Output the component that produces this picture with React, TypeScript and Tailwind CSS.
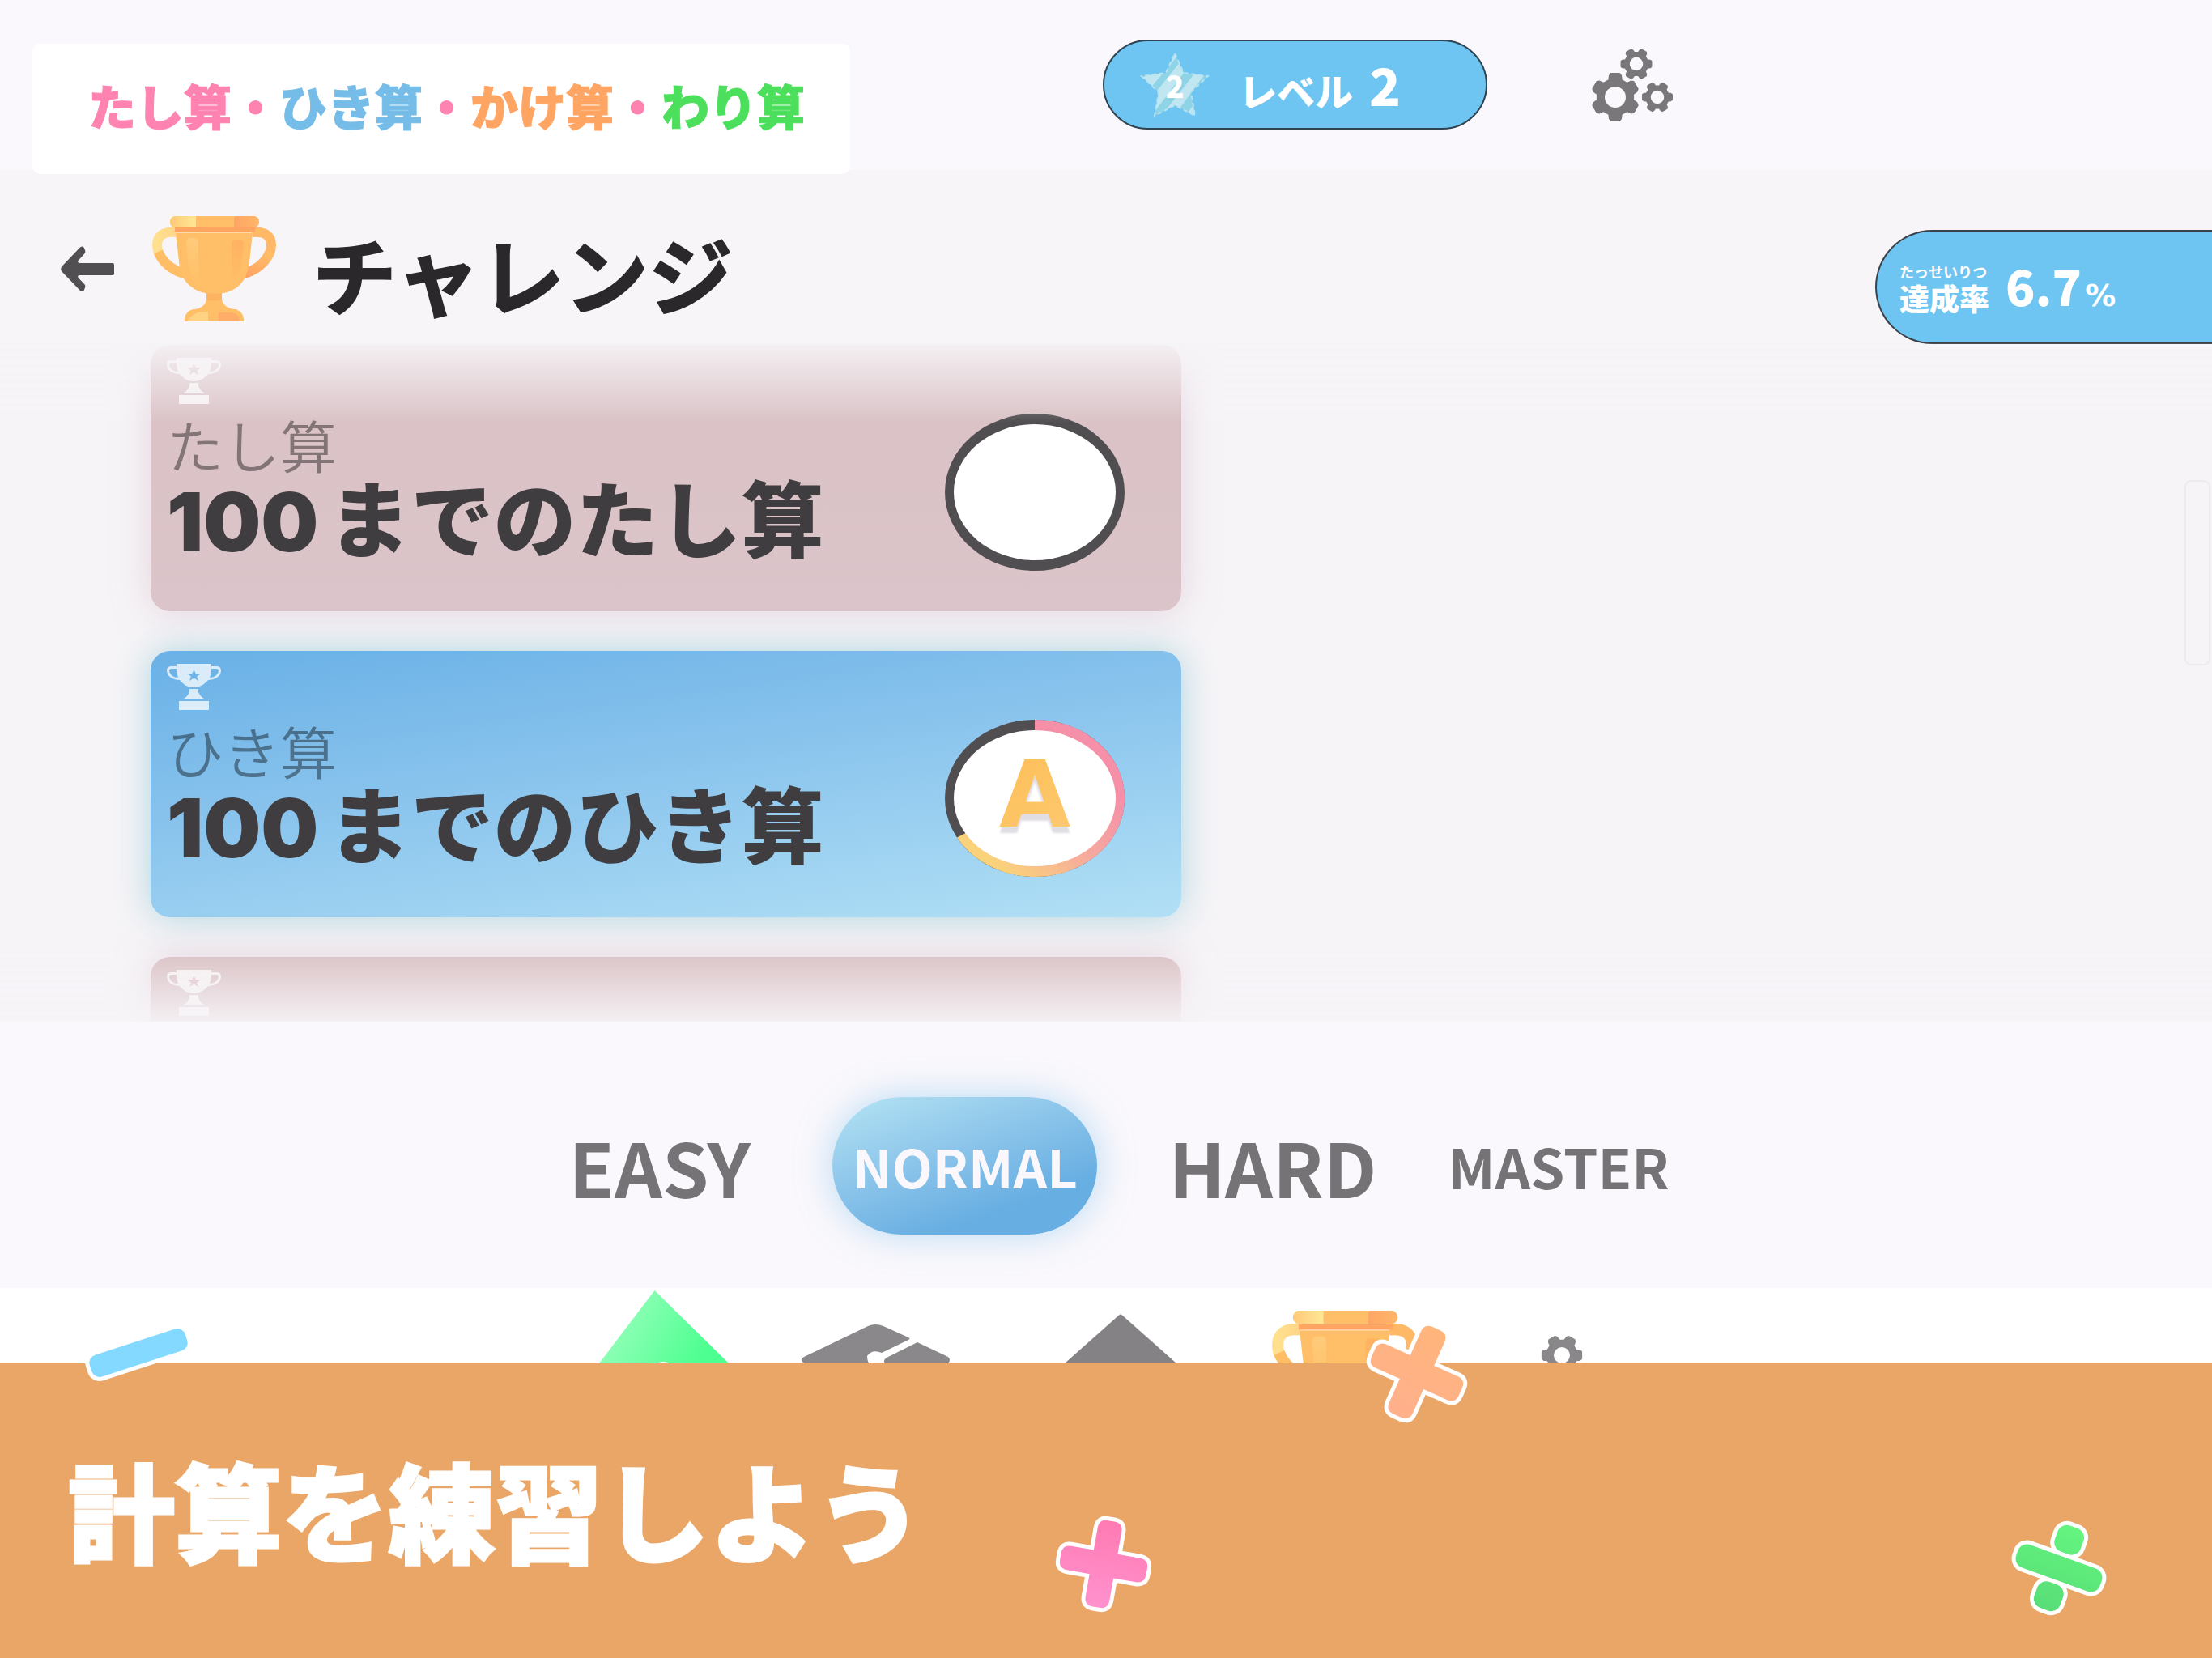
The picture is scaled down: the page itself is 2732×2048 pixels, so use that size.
import React, { useId } from "react";

const JP = "font-['Noto_Sans_CJK_JP','Noto_Sans',sans-serif]";

function gearPath(cx: number, cy: number, r: number, hole: number, start: number) {
  const body = r * 0.76;
  const pts: string[] = [];
  const at = (rad: number, deg: number) => {
    const a = (deg * Math.PI) / 180;
    return `${(cx + rad * Math.cos(a)).toFixed(2)} ${(cy + rad * Math.sin(a)).toFixed(2)}`;
  };
  for (let i = 0; i < 6; i++) {
    const a = start + i * 60;
    pts.push(at(body, a - 20), at(r * 0.93, a - 15), at(r, a - 10), at(r, a + 10), at(r * 0.93, a + 15), at(body, a + 20));
  }
  return (
    `M${pts.join("L")}Z` +
    `M${cx - hole} ${cy}a${hole} ${hole} 0 1 0 ${hole * 2} 0a${hole} ${hole} 0 1 0 ${-hole * 2} 0Z`
  );
}

function Gears() {
  return (
    <svg className="h-[104px] w-[104px]" viewBox="0 0 104 104" fill="#79777a" stroke="#79777a" strokeLinejoin="round" fillRule="evenodd">
      <path strokeWidth="2" d={gearPath(32, 68, 29.5, 14, 30)} />
      <path strokeWidth="1.5" d={gearPath(58, 27, 19, 9, 0)} />
      <path strokeWidth="1.5" d={gearPath(84, 68, 18.5, 9, 0)} />
    </svg>
  );
}

function Trophy({ className }: { className: string }) {
  const id = useId();
  return (
    <svg className={className} viewBox="0 0 153 130" fill="none">
      <defs>
        <linearGradient id={`${id}l`} x1="0" y1="0" x2="1" y2="0">
          <stop offset="0" stopColor="#ffc978" />
          <stop offset="1" stopColor="#ffe795" />
        </linearGradient>
        <linearGradient id={`${id}r`} x1="0" y1="0" x2="1" y2="0">
          <stop offset="0" stopColor="#ffa566" />
          <stop offset="1" stopColor="#ffb768" />
        </linearGradient>
        <linearGradient id={`${id}h`} x1="1" y1="0" x2="0" y2="0">
          <stop offset="0" stopColor="#ffd588" />
          <stop offset="1" stopColor="#ffe08e" />
        </linearGradient>
        <linearGradient id={`${id}g`} x1="1" y1="0" x2="0" y2="1">
          <stop offset="0" stopColor="#ffbf68" />
          <stop offset="1" stopColor="#ffa163" />
        </linearGradient>
        <linearGradient id={`${id}s`} x1="0" y1="0" x2="0" y2="1">
          <stop offset="0" stopColor="#ffcb7a" />
          <stop offset="1" stopColor="#ffbf68" />
        </linearGradient>
        <linearGradient id={`${id}t`} x1="0" y1="0" x2="0" y2="1">
          <stop offset="0" stopColor="#ffb262" />
          <stop offset="1" stopColor="#ffbf68" />
        </linearGradient>
      </defs>
      <path d="M30 20C13 18 6 25 6 36c0 4 1 8 3 12" stroke={`url(#${id}h)`} strokeWidth="12" />
      <path d="M7.500 44C13 58 25 67 42 72" stroke="#ffbd66" strokeWidth="12" />
      <path d="M123 20c17-2 24 5 24 16 0 4-1 8-3 12" stroke="#ffb866" strokeWidth="12" />
      <path d="M145.500 44C140 58 128 67 111 72" stroke={`url(#${id}g)`} strokeWidth="12" />
      <path d="M28 14h99v6H28z" fill="#ffa562" />
      <path d="M29 20.500h95l-4 36c-2 22-14 36-34 39v7c1 8 8 12 19 13v6H49v-6c11-1 17-5 18-13v-7C47 91 35 79 33 56z" fill="#ffbf68" />
      <path d="M67 95q9.500 1.500 19 0v8q-8 3-18 1z" fill="#fcb462" />
      <path d="M42 32q0-5 5-5h5q5 0 5 5v28c0 9 2 16 6 23-11-4-18-15-19-28z" fill={`url(#${id}s)`} />
      <path d="M98 34q0-5 5-5h5q5 0 5 5l-2 22c-1 12-7 22-14 27 2-6 1-14 1-23z" fill={`url(#${id}t)`} />
      <rect x="22" y="0" width="110" height="14" rx="7" fill="#ffbf68" />
      <path d="M29 0h25v14H29a7 7 0 0 1 0-14z" fill={`url(#${id}l)`} />
      <path d="M105 0h20a7 7 0 0 1 0 14h-24V4q0-4 4-4z" fill={`url(#${id}r)`} />
      <path d="M40 130v-3c1-8 6-12 14-12h45c8 0 13 4 14 12v3z" fill="#ffbf68" />
      <path d="M42 130q12-13 20-12h7v12z" fill="#ffd382" />
      <path d="M82 119h14q11 0 12 11H82z" fill="#ffad68" />
    </svg>
  );
}

function CupIcon() {
  return (
    <svg className="h-[57px] w-[67px]" viewBox="0 0 67 57" fill="#fff" fillOpacity="0.75">
      <path
        fillRule="evenodd"
        d="M12 0h43v3h6q6 0 6 5c0 8-8 12-16 12-4 5-10 9-18 9s-13-4-17-9C8 20 0 16 0 8q0-5 6-5h6zM12 6H6q-3 0-3 3c1 5 6 8 11 8q-2-5-2-11zm43 0q0 6-2 11c5 0 10-3 11-8q0-3-3-3zM33.500 7l-2.200 5H25l4.800 3.500L28 21l5.500-3.400L39 21l-1.800-5.500L42 12h-6.300z"
      />
      <path d="M28 31h11v4q2 5 7 8v1H21v-1q5-3 7-8z" />
      <path d="M15 46h37v11H15z" />
    </svg>
  );
}

function Ring({ progress }: { progress: boolean }) {
  const id = useId();
  return (
    <svg className="h-[194px] w-[222px]" viewBox="0 0 222 194">
      <defs>
        <linearGradient id={id} x1="0.9" y1="0.1" x2="0.2" y2="0.9">
          <stop offset="0.25" stopColor="#f590a8" />
          <stop offset="0.6" stopColor="#f6a89f" />
          <stop offset="1" stopColor="#fad27a" />
        </linearGradient>
      </defs>
      <ellipse cx="111" cy="97" rx="111" ry="97" fill="#504e50" />
      {progress && <path d="M111 0A111 97 0 1 1 15 145.500L111 97Z" fill={`url(#${id})`} />}
      <ellipse cx="111" cy="97" rx="100" ry="84" fill="#fff" />
    </svg>
  );
}

function Card({ kind, title, grade, tone }: { kind?: string; title?: string; grade?: string; tone: "pink" | "blue" }) {
  return (
    <button
      type="button"
      className={`flex min-h-[329px] w-[1273px] max-w-full shrink-0 items-start justify-between rounded-[24px] pt-[16px] pr-[70px] pb-[45px] pl-[20px] text-left ${
        tone === "pink"
          ? "bg-linear-to-b from-[#d9c1c4] to-[#dcc5ca] shadow-[0_0_44px_rgba(214,190,204,0.6)]"
          : "bg-[linear-gradient(172deg,#6cb2e7_4%,#8ac4ed_45%,#b0dff5_98%)] shadow-[0_0_44px_rgba(160,208,218,0.85)]"
      }`}
    >
      <span className="flex flex-col">
        <CupIcon />
        {kind && <span className="mt-[14px] text-[70px] leading-[72px] font-[350] text-black/40">{kind}</span>}
        {title && (
          <span className="flex items-baseline gap-[12px] text-[102px] leading-[104px] font-black text-[#403d40]">
            <span className="font-['Inter',sans-serif] text-[100px] font-black">100</span>
            <span>{title}</span>
          </span>
        )}
      </span>
      <span className="relative mt-[69px] block">
        <Ring progress={Boolean(grade)} />
        {grade && (
          <span className="absolute inset-0 flex items-center justify-center bg-linear-to-br from-[#fbb949] to-[#ffcf7c] bg-clip-text pb-[8px] font-['DejaVu_Sans',sans-serif] text-[114px] leading-[114px] font-bold text-transparent drop-shadow-[0_8px_1px_rgba(60,50,80,0.16)]">
            {grade}
          </span>
        )}
      </span>
    </button>
  );
}

function Sign({ className, from, to, angle, children }: { className: string; from: string; to: string; angle: number; children: React.ReactNode }) {
  const id = useId();
  return (
    <svg className={`absolute h-[160px] w-[160px] ${className}`} viewBox="-80 -80 160 160" aria-hidden="true">
      <defs>
        <linearGradient id={id} gradientUnits="userSpaceOnUse" x1="0" y1="-56" x2="0" y2="56">
          <stop offset="0" stopColor={from} />
          <stop offset="1" stopColor={to} />
        </linearGradient>
      </defs>
      <g transform={`rotate(${angle})`}>
        <g fill="#fff" stroke="#fff" strokeWidth="10">{children}</g>
        <g fill={`url(#${id})`}>{children}</g>
      </g>
    </svg>
  );
}

function LevelStar() {
  const star = "M43 2L54 26 84 30 63 50 68 79 43 66 18 79 23 50 2 30 32 26Z";
  return (
    <span className="relative block">
      <svg className="h-[82px] w-[86px]" viewBox="0 0 86 82">
        <clipPath id="star-clip">
          <path d={star} />
        </clipPath>
        <g clipPath="url(#star-clip)">
          <path d="M0 0h86v82H0z" fill="#8fd3e6" />
          <path d="M43-10h16L-10 72V48zM80-8L12 82h-18L66-8zM90 14L40 82H24L90-2zM90 46L66 82H54L90 34z" fill="#c0e7f1" />
        </g>
        <path d={star} fill="none" stroke="#b5e2f3" strokeWidth="2" strokeDasharray="5 4" />
      </svg>
      <span className="absolute inset-0 flex items-center justify-center text-[38px] leading-[38px] font-black text-white">2</span>
    </span>
  );
}

const levels = [
  { name: "EASY", size: "text-[92px]" },
  { name: "NORMAL", size: "text-[65px]" },
  { name: "HARD", size: "text-[92px]" },
  { name: "MASTER", size: "text-[68px]" },
];

export default function App() {
  return (
    <div className={`flex min-h-screen flex-col overflow-hidden bg-[#f7f5f8] ${JP}`}>
      <header className="grid h-[210px] grid-cols-2 bg-[#faf8fc]">
        <div className="pt-[54px] pl-[40px]">
          <div className="relative z-10 flex h-[161px] w-fit items-center rounded-[10px] bg-white pr-[56px] pb-[10px] pl-[69px] text-[59px] leading-[59px] font-black whitespace-nowrap text-[#ff83b0] [-webkit-text-stroke:1px]">
            <span>たし算</span>
            <span>・</span>
            <span className="text-[#75bde8]">ひき算</span>
            <span>・</span>
            <span className="text-[#ffa564]">かけ算</span>
            <span>・</span>
            <span className="text-[#4cdf5c]">わり算</span>
          </div>
        </div>
        <div className="flex items-start gap-[126px] pt-[49px]">
          <div className="-ml-1 flex h-[111px] w-[475px] items-center rounded-full border-2 border-[#2f4350] bg-[#6fc5f2] pl-[44px] font-black text-white">
            <LevelStar />
            <p className="ml-[36px] flex items-baseline gap-[20px] pt-[4px] leading-[66px]">
              <span className="text-[47px]">レベル</span>
              <span className="text-[64px]">2</span>
            </p>
          </div>
          <button type="button" aria-label="設定" className="mt-[3px] block">
            <Gears />
          </button>
        </div>
      </header>

      <div className="flex h-[214px] items-center pt-[30px] pl-[75px]">
        <button type="button" aria-label="もどる">
          <svg className="h-[56px] w-[66px]" viewBox="0 0 66 56" fill="#524f53">
            <path d="M1 25.500L24 1.500q2.500-2 4.500 0l1.500 3.500q1 2.500-.8 4.500L22 17.500q-2.500 3.500 2 3.500h40q2 0 2 2v11q0 2-2 2H24q-4.500 0-2 3.500l7.200 7.500q1.800 2 .8 4.500l-1.500 3.500q-2 2-4.500 0L1 31q-1.500-2.500 0-5.500z" />
          </svg>
        </button>
        <Trophy className="ml-[47px] h-[130px] w-[153px]" />
        <h1 className="ml-[45px] pt-[10px] text-[104px] leading-[104px] font-bold text-[#2b282b] [-webkit-text-stroke:2px]">チャレンジ</h1>
        <div className="mt-[44px] ml-auto flex h-[141px] w-[416px] items-center rounded-l-full border-2 border-r-0 border-[#3a4148] bg-[#6fc5f2] pl-[28px] text-white">
          <div className="font-black">
            <p className="text-[18px] leading-[28px] font-bold">たっせいりつ</p>
            <p className="text-[37px] leading-[38px]">達成率</p>
          </div>
          <p className="ml-[20px] flex items-baseline gap-[4px] pt-[8px] leading-[60px] font-black">
            <span className="text-[60px]">6.7</span>
            <span className="font-['DejaVu_Sans',sans-serif] text-[38px] font-bold">%</span>
          </p>
        </div>
      </div>

      <div className="relative">
        <main className="flex h-[838px] flex-col gap-[49px] overflow-hidden bg-[#f6f4f7] mask-[linear-gradient(to_bottom,rgba(0,0,0,0.08)_0px,black_98px,black_750px,rgba(0,0,0,0.1)_838px)] pt-[2px] pl-[186px]">
          <Card tone="pink" kind="たし算" title="までのたし算" />
          <Card tone="blue" kind="ひき算" title="までのひき算" grade="A" />
          <Card tone="pink" />
        </main>
        <div className="absolute top-[169px] right-[2px] h-[229px] w-[32px] rounded-[8px] border-2 border-[#eeebee]" />
      </div>

      <div className="flex h-[329px] items-center justify-center gap-[88px] bg-[#faf8fc] pt-[26px] pl-[32px] font-bold text-[#767377]">
        {levels.map((l) => (
          <button
            key={l.name}
            type="button"
            aria-pressed={l.name === "NORMAL"}
            className={`leading-[90px] ${l.size} ${
              l.name === "NORMAL"
                ? "h-[170px] w-[327px] rounded-full bg-[linear-gradient(160deg,#b0e0f2_5%,#8bc4ea_42%,#67aee2_75%)] text-[#faf8fc] shadow-[0_0_44px_rgba(120,190,240,0.5)]"
                : "min-w-[238px] text-left"
            }`}
          >
            {l.name}
          </button>
        ))}
      </div>

      <nav className="flex h-[93px] items-start justify-center overflow-hidden bg-white pr-[37px]">
        <button type="button" aria-label="ホーム" className="mt-[3px]">
          <svg className="h-[90px] w-[160px]" viewBox="0 0 160 90">
            <defs>
              <linearGradient id="home-fill" x1="0" y1="0.3" x2="1" y2="0.6">
                <stop offset="0.1" stopColor="#95ffba" />
                <stop offset="0.9" stopColor="#4dff90" />
              </linearGradient>
            </defs>
            <path d="M68.500 0L160 90H0z" fill="url(#home-fill)" />
            <ellipse cx="79" cy="92" rx="8" ry="4" fill="#fff" />
          </svg>
        </button>
        <button type="button" aria-label="学習" className="mt-[45px] ml-[90px]">
          <svg className="h-[48px] w-[183px]" viewBox="0 0 183 48" fill="#8a888b">
            <path d="M82 2q9-4 19 0l31 14q3 1.500 0 3L99 35q-12-5-18 4 0 5 2 9H3q-6-5 0-8z" />
            <path d="M143 22l38 18q4 4 0 8h-78q-3-4 2-7z" />
          </svg>
        </button>
        <button type="button" aria-label="問題" className="mt-[32px] ml-[142px]">
          <svg className="h-[61px] w-[138px]" viewBox="0 0 138 61" fill="#848285">
            <path d="M67 1.500q2-2 4 0L138 61H0z" />
          </svg>
        </button>
        <button type="button" aria-label="チャレンジ" className="mt-[28px] ml-[118px] shrink-0">
          <Trophy className="h-[153px] w-[180px]" />
        </button>
        <button type="button" aria-label="設定" className="mt-[57px] ml-[152px] shrink-0">
          <svg className="h-[52px] w-[52px]" viewBox="0 0 52 52" fill="#89878a" stroke="#89878a" strokeWidth="2" strokeLinejoin="round" fillRule="evenodd">
            <path d={gearPath(26, 26, 24.5, 11, 0)} />
          </svg>
        </button>
      </nav>

      <footer className="relative flex flex-1 items-center bg-[#e9a667] pt-[110px] pb-[116px] pl-[84px]">
        <h2 className="text-[132px] leading-[132px] font-black text-white [-webkit-text-stroke:3px_white] [stroke-linejoin:round]">計算を練習しよう</h2>
        <Sign className="top-[-93px] left-[91px]" from="#83d9ff" to="#83d9ff" angle={-18}>
          <rect x="-62" y="-14" width="124" height="28" rx="10" />
        </Sign>
        <Sign className="top-[-69px] left-[1670px]" from="#ffb57c" to="#ffb08c" angle={24}>
          <path d="M-16-48q0-11 11-11H5q11 0 11 11v32h32q11 0 11 11V5q0 11-11 11H16v32q0 11-11 11H-5q-11 0-11-11V16h-32q-11 0-11-11V-5q0-11 11-11h32z" />
        </Sign>
        <Sign className="top-[168px] left-[1283px]" from="#ff7ab2" to="#ff92cf" angle={10}>
          <path d="M-15-43q0-11 11-11H4q11 0 11 11v28h28q11 0 11 11V4q0 11-11 11H15v28q0 11-11 11H-4q-11 0-11-11V15h-28q-11 0-11-11V-4q0-11 11-11h28z" />
        </Sign>
        <Sign className="top-[173px] right-[109px]" from="#64f57f" to="#58dd77" angle={20}>
          <rect x="-55" y="-15" width="110" height="30" rx="12" />
          <rect x="-17" y="-54" width="34" height="34" rx="12" />
          <rect x="-17" y="20" width="34" height="34" rx="12" />
        </Sign>
      </footer>
    </div>
  );
}
